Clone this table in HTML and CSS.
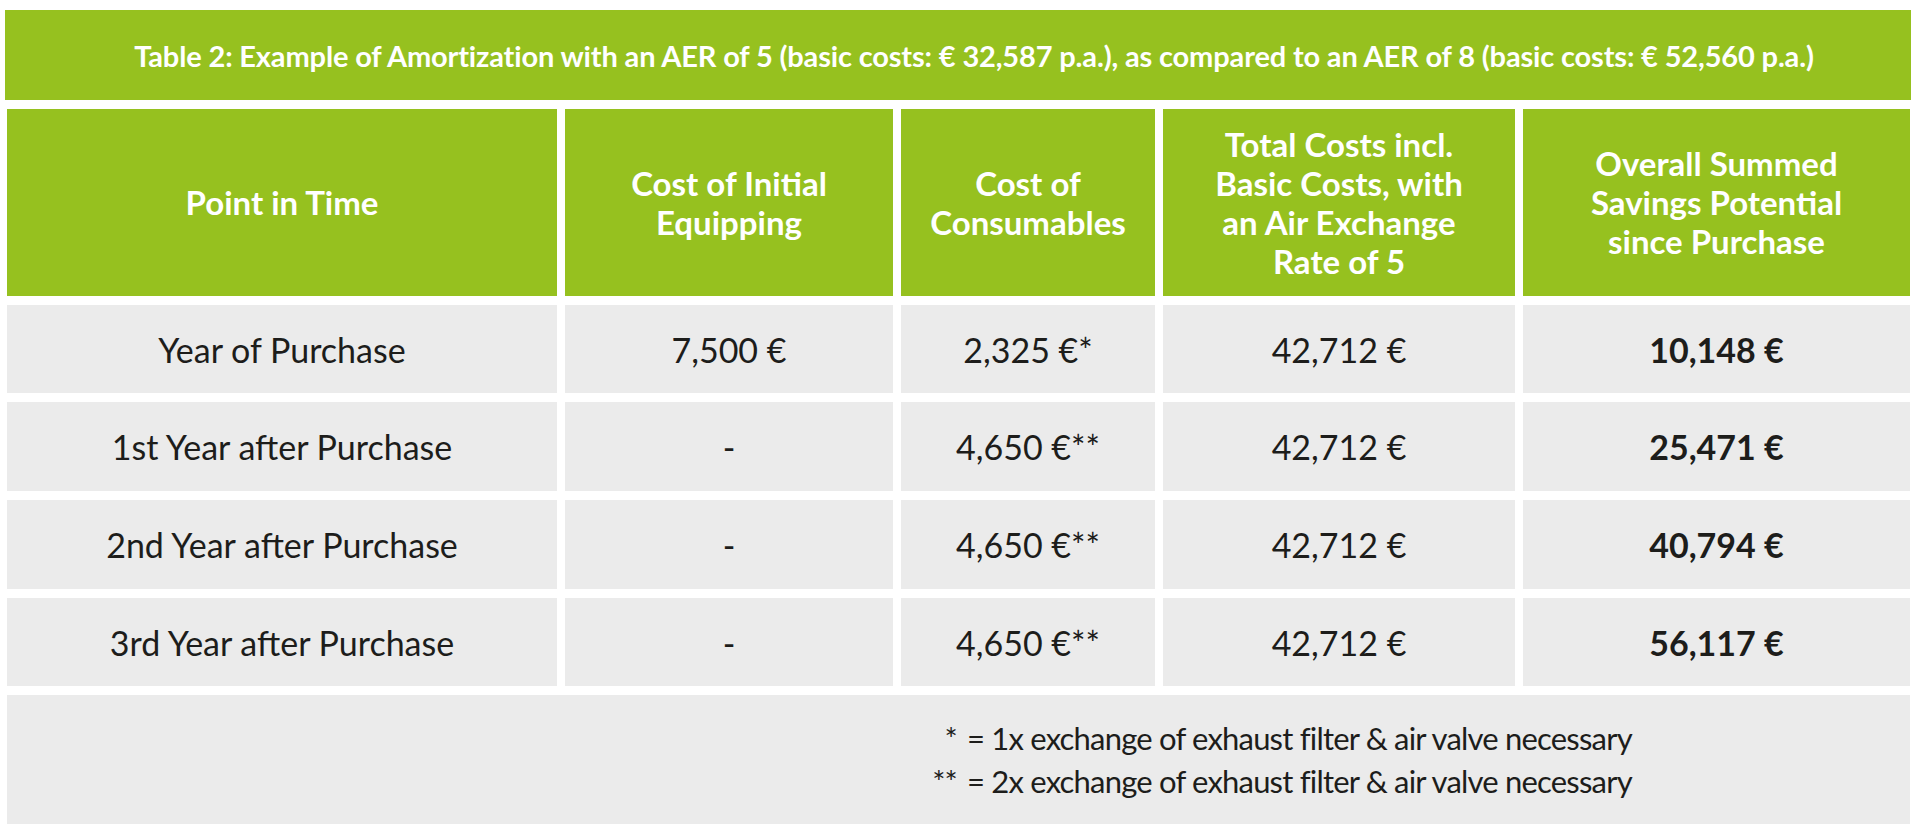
FILE: index.html
```html
<!DOCTYPE html>
<html lang="en">
<head>
<meta charset="utf-8">
<title>Table 2: Example of Amortization</title>
<link rel="stylesheet" href="styles.css">
</head>
<body>
<div class="page">
  <div class="caption">Table 2: Example of Amortization with an AER of 5 (basic costs: € 32,587 p.a.), as compared to an AER of 8 (basic costs: € 52,560 p.a.)</div>
  <div class="table">
    <div class="th">Point in Time</div>
    <div class="th">Cost of Initial<br>Equipping</div>
    <div class="th">Cost of<br>Consumables</div>
    <div class="th">Total Costs incl.<br>Basic Costs, with<br>an Air Exchange<br>Rate of 5</div>
    <div class="th">Overall Summed<br>Savings Potential<br>since Purchase</div>

    <div class="td">Year of Purchase</div>
    <div class="td">7,500 €</div>
    <div class="td">2,325 €*</div>
    <div class="td">42,712 €</div>
    <div class="td strong">10,148 €</div>

    <div class="td">1st Year after Purchase</div>
    <div class="td">-</div>
    <div class="td">4,650 €**</div>
    <div class="td">42,712 €</div>
    <div class="td strong">25,471 €</div>

    <div class="td">2nd Year after Purchase</div>
    <div class="td">-</div>
    <div class="td">4,650 €**</div>
    <div class="td">42,712 €</div>
    <div class="td strong">40,794 €</div>

    <div class="td">3rd Year after Purchase</div>
    <div class="td">-</div>
    <div class="td">4,650 €**</div>
    <div class="td">42,712 €</div>
    <div class="td strong">56,117 €</div>

    <div class="notes-cell">
      <div class="notes">
        <span class="mark">*</span><span class="note">= 1x exchange of exhaust filter &amp; air valve necessary</span>
        <span class="mark">**</span><span class="note">= 2x exchange of exhaust filter &amp; air valve necessary</span>
      </div>
    </div>
  </div>
</div>
</body>
</html>
```

FILE: styles.css
```css
html, body {
  margin: 0;
  padding: 0;
  background: #ffffff;
}

body {
  font-family: Lato, "Open Sans", "Liberation Sans", sans-serif;
  color: #1d1d1b;
}

.page {
  width: 1920px;
  padding-top: 10px;
}

.caption {
  box-sizing: border-box;
  margin-left: 5px;
  width: 1906px;
  height: 90px;
  padding-left: 32px;
  background: #96c11f;
  color: #ffffff;
  font-weight: 700;
  font-size: 29px;
  letter-spacing: -0.15px;
  display: flex;
  align-items: center;
  justify-content: center;
  white-space: nowrap;
}

.table {
  margin-top: 9px;
  margin-left: 7px;
  width: 1903px;
  display: grid;
  grid-template-columns: 550px 328px 254px 352px 387px;
  grid-template-rows: 187px 88px 89px 89px 88px 129px;
  column-gap: 8px;
  row-gap: 9px;
}

.th {
  background: #96c11f;
  color: #ffffff;
  font-weight: 700;
  font-size: 33px;
  line-height: 39px;
  display: flex;
  align-items: center;
  justify-content: center;
  text-align: center;
}

.td {
  background: #ebebeb;
  font-size: 34px;
  font-weight: 400;
  display: flex;
  align-items: center;
  justify-content: center;
  text-align: center;
  white-space: nowrap;
}

.td.strong {
  font-weight: 700;
}

.notes-cell {
  grid-column: 1 / -1;
  background: #ebebeb;
  display: flex;
  align-items: center;
  padding-left: 888px;
}

.notes {
  display: grid;
  grid-template-columns: 62px auto;
  column-gap: 10px;
  row-gap: 0;
  font-size: 31px;
  line-height: 43px;
  letter-spacing: -0.8px;
  white-space: nowrap;
}

.mark {
  text-align: right;
}
```
